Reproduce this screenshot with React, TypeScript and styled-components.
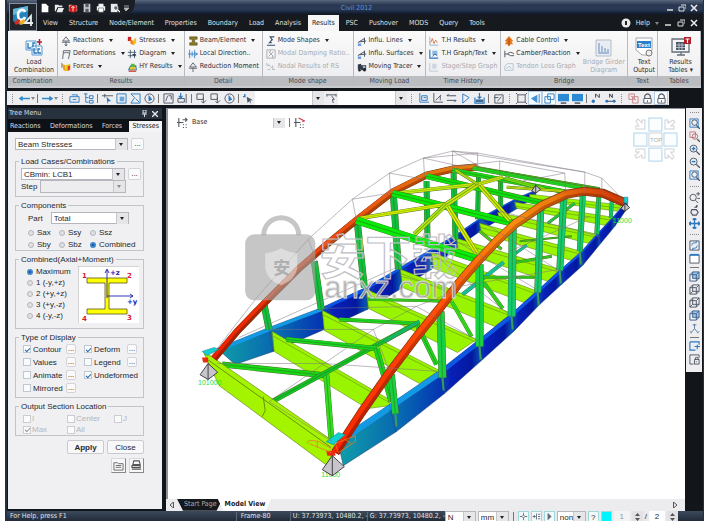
import React from "react";
import styled, { createGlobalStyle, css } from "styled-components";

const uiFont = `"DejaVu Sans Condensed", "DejaVu Sans", sans-serif`;
const formFont = `"Liberation Sans", Arial, sans-serif`;

const GlobalStyle = createGlobalStyle`
  *, *::before, *::after { box-sizing: border-box; }
  body { margin: 0; background: #fff; font: 7px/9px ${uiFont}; color: #2c2f38; }
  button, select, input { font: inherit; color: inherit; margin: 0; padding: 0; border: 0; background: none; border-radius: 0; }
  button { cursor: pointer; white-space: nowrap; }
  svg { display: block; flex: none; }
`;

/* ---------- icons ---------- */

const B = "#2b78c0";
const D = "#4c5563";

const glyphs: Record<string, React.ReactNode> = {
  new: <path d="M2 1h5l3 3v7H2z" fill="#fff" />,
  open: <path d="M1 2h4l1 1h4v2H4l-2 5H1zM5 6h7l-2 5H3z" fill="#e8eaec" />,
  openRed: (<><path d="M1 2h4l1 1h5v7H1z" fill="#e8a090" /><circle cx="6" cy="7" r="4.5" fill="#d01818" /><path d="M6 4v6M4 6l2-2 2 2" stroke="#fff" /></>),
  save: (<><path d="M2 1h8v10H2z" fill="#c8ccd2" /><path d="M4 1h4v4H4zM4 7h4v4H4z" fill="#555c66" /></>),
  print: (<><path d="M3 1h6v3H3zM1 4h10v5H1z" fill="#f2f2f2" /><path d="M3 6h6v5H3z" fill="#fff" stroke="#555" strokeWidth=".7" /></>),
  preview: (<><path d="M1 1h8v10H1z" fill="#e9e9e9" /><circle cx="7" cy="6" r="2.6" fill="#5a6470" stroke="#fff" /><path d="M9 8l3 3" stroke="#fff" strokeWidth="1.4" /></>),
  reactions: <path d="M6 1L2 6h8zM1 7.500h10M6 7v5M4.500 10L6 12l1.500-2" stroke={D} />,
  deform: <path d="M2 12L3 2h8L9 12M3 5q4-2 7 0" stroke={D} />,
  forces: (<><path d="M1 2l4 2 1 7-3-1z" fill="#f0a020" /><path d="M5 4l6-2v6l-5 3z" fill="#e8d020" /><path d="M8 5l3-1v5l-3 2z" fill="#e04020" /><path d="M1 1v6" stroke="#3080d0" /></>),
  stresses: (<><path d="M1 1h4v5H1z" fill="#d02020" /><path d="M4 4l4 2v5l-4-2z" fill="#f08020" /><path d="M8 4l3-2v6l-3 3z" fill="#f0c020" /></>),
  diagram: (<><path d="M1 4h10M1 8h10M4 1v10M9 1v10" stroke="#40566e" /><path d="M6 6h5l-2 3z" fill="#303848" /></>),
  hy: (<><path d="M1 10l3-6h7l1 6z" fill="#2a7fc4" /><path d="M3 9l2-7h4l2 7z" fill="#58b848" /><path d="M3 9l1-3h6l1 3z" fill="#f0c030" /><path d="M2 11h9" stroke="#d03020" strokeWidth="1.500" /></>),
  beam: <path d="M2 1h9v3H8v4h3v3H2V8h3V4H2z" fill="#8a7a20" stroke="#4a4420" strokeWidth=".6" />,
  local: <path d="M2 1v10M8 1v10M0 6h12M5 3v6M9 4l2 2-2 2" stroke={B} />,
  reduction: <path d="M6 1L2 6h8zM1 7.500h10M6 7v5" stroke={D} />,
  mode: <path d="M10 1H5l2 3-2 4M8 4L4 8l3 0M1 11h10" stroke="#3a536c" strokeWidth="1.300" />,
  damping: <path d="M1 1h10v10H1zM3 3l6 6M9 3L3 9M5 1v3M8 8v3" stroke="#a0a4aa" />,
  nodal: <path d="M1 1v3h3M3 3l5 5M8 4v5h3M2 9h3" stroke="#b0b4ba" />,
  influ: (<><path d="M1 8L9 3v6M3 7l8-1M9 2v7" stroke="#4a5666" strokeWidth="1.200" /><path d="M1 9h4v3H1z" fill="#6a9ce0" /></>),
  tracer: (<><path d="M1 3l4-1v7H1zM5 4h6v6H5z" fill="#303c4c" /><path d="M7 5h3v2H7z" fill="#bcd" /><circle cx="3" cy="10" r="1.500" fill="#222" /><circle cx="9" cy="10" r="1.500" fill="#222" /></>),
  thRes: (<><path d="M1 1v10h10" stroke="#8aa8c8" /><path d="M2 8l2-5 2 6 2-4 2 3" stroke="#e06a30" /></>),
  thGraph: (<><path d="M1 1v10h10" stroke={B} strokeWidth="1.400" /><path d="M4 2h6v5H4z" fill="#8ab8e4" /><path d="M4 9l3-3 3 2" stroke="#204a78" /></>),
  stage: (<><path d="M1 1v10h10" stroke="#b4c4d4" /><path d="M4 2h5v6H4z" fill="#ccd6e0" /></>),
  cable: (<><path d="M6 0L1 6l2 1-2 3h3l2 2 2-2h3l-2-3 2-1z" fill="#e87820" /><path d="M6 3v9" stroke="#a04010" /></>),
  camber: <path d="M1 2v8M1 6h3q4-4 8 0M4 6q4 3 8 2" stroke="#404854" />,
  tendon: <path d="M1 10V5l3-3h7v8zM3 8q3-5 6 0" stroke="#a8c0d8" />,
  drop: <path d="M1 4h10v6H1zM3 2h6v2M4 7h4" stroke={B} />,
  tree: <path d="M1 1h4M3 1v9h3M3 5h3M7 3h4v3H7zM7 8h4v3H7z" stroke={B} />,
  pick: (<><path d="M0 3h12M3 1v4" stroke={D} /><path d="M5 4l5 5-3 0-1 3z" fill={B} /></>),
  box: (<><path d="M1 1h10v10H1z" stroke={B} /><path d="M4 4h5v5H4z" fill="#6aa6dc" /></>),
  poly: <path d="M1 1l4 4-4 6h10V1zM6 6l4 4" stroke={B} />,
  circ: (<><circle cx="6" cy="6" r="5" stroke={D} fill="none" /><path d="M5 2v7l4-2z" fill={B} /></>),
  plane: <path d="M1 1h10v10H1zM3 9l2-6M6 3h3v4" stroke={D} />,
  down: (<><path d="M1 6h7v4H1zM10 1v10" stroke={D} /><path d="M4 0v5M2 3l2 3 2-3" stroke={B} strokeWidth="1.300" /></>),
  unsel: <path d="M1 1h7v6H1zM8 5v6M6 9l2 2 3-3" stroke={D} />,
  arrowPick: (<><path d="M2 1v3H0" stroke={B} strokeWidth="1.500" /><path d="M4 4l7 4-3 0 1 4-2-3-2 2z" fill={D} /></>),
  joint: <path d="M1 2h10M1 1v3M11 1v3M6 3l3 4-2 0 1 4" stroke={D} />,
  axis: <path d="M2 0v10h10M4 3h6v5H4zM6 5h3" stroke={B} />,
  axisD: <path d="M2 0v10h10M4 8l6-6M9 3v5" stroke={D} />,
  lines: <path d="M1 3h10M1 8h10M3 1l-2 2M9 10l2-2" stroke="#3a4858" />,
  tri: <path d="M3 1v10l7-6z" stroke={B} />,
  inbox: (<><path d="M1 5v6h10V5M6 0v6M4 4l2 2 2-2" stroke={B} strokeWidth="1.300" /><path d="M2 7h8v3H2z" fill="#406890" /></>),
  edit: <path d="M2 2h9v9H2zM5 9l4-5M1 5h5" stroke={D} />,
  frame: <path d="M2 2h8v8H2zM0 0l2 2M12 0l-2 2M0 12l2-2M12 12l-2-2" stroke={D} />,
  fan: (<><path d="M1 6l7-4v9z" fill="#3f92d8" /><path d="M10 1v10" stroke={B} /></>),
  copy: <path d="M4 1h7v6H4zM1 4h6v7H1z" stroke={B} />,
  monitor: (<><path d="M0 1h12v8H0z" fill="#2b8ad4" /><path d="M3 11h6" stroke={D} strokeWidth="1.600" /></>),
  node: (<><path d="M5 5V1l4 4V1" stroke="#303848" /><circle cx="2.500" cy="9" r="1.800" fill={B} /></>),
  nodes: (<><path d="M5 5V1l3 4V1M1 9h10" stroke="#303848" /><circle cx="2" cy="9" r="1.600" fill={B} /><circle cx="10" cy="9" r="1.600" fill={B} /></>),
  copyRed: <path d="M1 1h6v6H1zM5 4h6v7H5zM3 3l6 5" stroke="#c8868a" />,
  lock: (<><path d="M3 6V3q3-4 6 0v3" stroke={D} strokeWidth="1.200" /><path d="M2 6h8v5H2z" fill="#fff" stroke={D} /><path d="M6 8v2" stroke={D} /></>),
  left: <path d="M12 6H2M4 4L1 6l3 2" stroke="#2f8ad0" strokeWidth="1.600" />,
  right: <path d="M0 6h10M8 4l3 2-3 2" stroke="#2f8ad0" strokeWidth="1.600" />,
  zoomFit: (<><path d="M1 1h9v9H1z" stroke={B} /><circle cx="6" cy="5" r="3" stroke={D} fill="#e6f1fa" /><path d="M8 8l4 4" stroke={D} strokeWidth="1.400" /></>),
  zoomRed: (<><path d="M1 1h6v6H1z" stroke="#c87878" /><circle cx="6.500" cy="6" r="3" stroke="#a86a70" fill="none" /><path d="M9 9l3 3" stroke={D} strokeWidth="1.400" /></>),
  zoomIn: (<><circle cx="5" cy="5" r="3.800" stroke={D} fill="#e6f1fa" /><path d="M8 8l4 4" stroke={D} strokeWidth="1.400" /><path d="M3 5h4M5 3v4" stroke={B} strokeWidth="1.500" /></>),
  zoomOut: (<><circle cx="5" cy="5" r="3.800" stroke={D} fill="#e6f1fa" /><path d="M8 8l4 4" stroke={D} strokeWidth="1.400" /><path d="M3 5h4" stroke={B} strokeWidth="1.500" /></>),
  zoomDyn: (<><circle cx="4.500" cy="6" r="3.500" stroke={D} fill="none" /><path d="M7 9l3 3M8 2h4M10 0v4M9 7h3" stroke={D} /></>),
  rotate: <path d="M3 5h5l2 3-2 3H4L2 8zM6 3l3-2M8 0l1 1-1 2" stroke={D} strokeWidth="1.200" />,
  pan: <path d="M6 0v12M0 6h12M4 2l2-2 2 2M4 10l2 2 2-2M2 4L0 6l2 2M10 4l2 2-2 2" stroke={B} strokeWidth="1.500" />,
  refresh: (<><path d="M1 1h10v10H1z" stroke={D} /><path d="M3 6q0-3 3-3h2V1M9 6q0 3-3 3H4v2" stroke={B} /></>),
  view: (<><path d="M1 2h10v9H1z" stroke={D} fill="#fff" /><path d="M1 2h10" stroke={B} strokeWidth="2" /></>),
  cube: <path d="M1 4h7v7H1zM4 1h7v7H4zM1 4l3-3M8 4l3-3M8 11l3-3M1 11l3-3" stroke={D} />,
  cubeFill: (<><path d="M4 1h7v7H4z" fill="#9fc6ea" /><path d="M1 4h7v7H1zM4 1h7v7H4zM1 4l3-3M8 4l3-3M8 11l3-3" stroke="#3d5f88" /></>),
  tripod: <path d="M6 1v5M6 6l-4 5M6 6l4 5M4 2h4M1 9l2 2M11 9l-2 2" stroke="#587898" />,
  addWin: <path d="M1 1h10v3M1 1v9h6M6 6h6M9 4v5" stroke={B} strokeWidth="1.200" />,
  lockWin: <path d="M1 1h10v3M1 1v10h4M6 6h5v5H6zM7 6V4h3v2M8 8v1" stroke={D} />,
  list: <path d="M1 3h4l1 1h5v7H1zM3 6h6M3 8h6" stroke="#666" />,
  stack: <path d="M3 1h6l1 4H2zM1 6h9v2H1zM1 10h10" stroke="#555" strokeWidth="1.200" />,
  section: <path d="M2 1v10M9 1l2 2-2 2M0 6h7M6 3h5M7 8v1M10 8v1M7 11v1M10 11v1" stroke="#505860" strokeWidth="1.200" />,
  sectionRed: (<><path d="M2 1v10M0 6h7M7 8v1M10 8v1M7 11v1M10 11v1" stroke="#505860" strokeWidth="1.200" /><path d="M5 1l6 3M9 5l3-1" stroke="#d03040" strokeWidth="1.200" /></>),
  snap: <path d="M6 1v3M6 8v3M1 6h3M8 6h3M4 6l2-2 2 2-2 2z" stroke="#456" />,
  grid: <path d="M1 6h4M6 2v8M8 3h3M8 6h3M8 9h3M3 4v4" stroke="#456" />,
  play: <path d="M4 2v8l4-4zM6 4v4" stroke="#456" fill="#789" />,
};

function Icon({ name, size = 11 }: { name: string; size?: number }) {
  return <svg width={size} height={size} viewBox="0 0 12 12" fill="none" aria-hidden="true">{glyphs[name]}</svg>;
}

const Caret = styled.span<{ $dim?: boolean }>`
  width: 0; height: 0; flex: none;
  border: 2px solid transparent; border-top: 3px solid ${(p) => (p.$dim ? "#888" : "#222")}; border-bottom: 0;
`;

/* ---------- frame ---------- */

const Page = styled.div`
  min-height: 100vh; padding: 0 4px 0 5px; display: flex; background: #fff;
`;
const Window = styled.div`
  flex: 1; min-width: 0; display: flex; flex-direction: column;
  background: #12161b; border: solid #26313f; border-width: 0 1px 0 2px;
`;
const Header = styled.header`
  display: grid; grid-template-columns: 30px minmax(0, 1fr); grid-template-rows: 15px 16px;
  background: linear-gradient(#59677d 0, #2a3650 5px, #2b3b58 9px, #101a2a 14px, #16191e 15px);
`;
const Logo = styled.button`
  grid-row: 1 / 3; align-self: end; margin-left: 2px; width: 28px; height: 28px;
  display: grid; place-items: center;
  background: #20262d; border: 1px solid #8b929b;
`;
const TitleBar = styled.div`
  display: grid; grid-template-columns: auto minmax(0, 1fr) auto; align-items: center;
`;
const QuickBar = styled.div`
  display: flex; align-items: center; gap: 4px; height: 15px; padding: 0 6px 0 3px;
  background: #1b1f25; border-bottom-right-radius: 12px; color: #fff;
  button { display: flex; }
`;
const AppTitle = styled.h1`
  margin: 0; padding-right: 88px; text-align: center; font: 7px/12px ${uiFont}; color: #4f92da;
`;
const WindowButtons = styled.div`
  display: flex; align-items: center; gap: 4px; padding-right: 5px;
  button { display: flex; }
`;
const TabBar = styled.nav`
  display: flex; align-items: stretch; background: #16191e; color: #dfe1e4;
`;
const TabButton = styled.button<{ $active?: boolean }>`
  padding: 0 5px 0 6px;
  ${(p) => p.$active && css`background: #f6f6f7; color: #1b1e25; padding: 0 4px; margin: 0 1px 0 2px;`}
`;
const TabRight = styled.div`
  margin-left: auto; display: flex; align-items: center; gap: 5px; padding-right: 5px;
  button { display: flex; }
`;

/* ---------- ribbon ---------- */

const Ribbon = styled.div`
  display: grid; margin: 0 2px 0 1px; height: 57px; background: #f1f1f3; border-bottom: 2px solid #c9cacd;
  grid-template-columns:
    minmax(0, 50fr) minmax(0, 127fr) minmax(0, 78fr) minmax(0, 91fr) minmax(0, 73fr)
    minmax(0, 75fr) minmax(0, 127fr) minmax(0, 30fr) minmax(0, 43fr);
`;
const Group = styled.section`
  display: flex; flex-direction: column; min-width: 0; border-right: 1px solid #b9babd;
  background: linear-gradient(#fafafa, #ececef);
`;
const GroupBody = styled.div`
  flex: 1; display: flex; padding: 3px 0 0 3px; min-width: 0;
`;
const Caption = styled.h2`
  margin: 0; height: 10px; font: 7px/10px ${uiFont}; text-align: center; color: #494c53;
  background: #bcbdc0; white-space: nowrap;
`;
const Column = styled.div<{ $width?: number }>`
  display: flex; flex-direction: column; min-width: 0; flex: ${(p) => (p.$width ? `0 1 ${p.$width}%` : "1")};
`;
const Command = styled.button`
  display: flex; align-items: center; gap: 2px; height: 13px; overflow: hidden;
  &:disabled { color: #a9abb0; }
  ${Caret} { margin-left: 3px; }
`;
const BigCommand = styled.button`
  flex: 1; display: flex; flex-direction: column; align-items: center; justify-content: flex-end;
  padding-bottom: 2px; line-height: 8px; gap: 1px; min-width: 0;
  &:disabled { color: #a9abb0; }
  span { white-space: pre-line; }
`;

type Cmd = { icon: string; label: string; menu?: boolean; off?: boolean };
const c = (icon: string, label: string, menu = false, off = false): Cmd => ({ icon, label, menu, off });

function Commands({ items, width }: { items: Cmd[]; width?: number }) {
  return (
    <Column $width={width}>
      {items.map((i) => (
        <Command key={i.label} disabled={i.off}>
          <Icon name={i.icon} size={10} />{i.label}{i.menu && <Caret />}
        </Command>
      ))}
    </Column>
  );
}

/* ---------- tool strips ---------- */

const StripRow = styled.div`
  display: flex; margin: 3px 34px 3px 0; height: 14px; align-items: center; background: #eeeef1; padding: 0 1px;
`;
const ToolButton = styled.button<{ $on?: boolean }>`
  width: 14px; height: 14px; display: grid; place-items: center; flex: 0 1 auto;
  ${(p) => p.$on && css`background: #f6fbff; outline: 1px solid #b6cde4; outline-offset: -1px;`}
`;
const Separator = styled.span`
  width: 1px; height: 9px; background: #777; margin: 0 2px; flex: none;
`;
const Grip = styled.span`
  width: 0; height: 9px; border-left: 1px dotted #888; margin: 0 4px; flex: none;
`;
const Combo = styled.span<{ $w?: number; $h?: number; $dim?: boolean }>`
  display: grid; grid-template-columns: minmax(0, 1fr) 12px; align-items: center; justify-items: center;
  flex: ${(p) => (p.$w ? `0 1 ${p.$w}px` : "1")}; min-width: 0; height: ${(p) => p.$h ?? 12}px;
  background: ${(p) => (p.$dim ? "#ededf0" : "#fff")}; border: 1px solid #b5b7bc;
  select { grid-area: 1 / 1 / 2 / 3; width: 100%; height: 100%; appearance: none; padding: 0 2px; outline: 0; }
  ${Caret} { grid-area: 1 / 2; pointer-events: none; z-index: 1; }
  &::after { content: ""; grid-area: 1 / 2; width: 12px; height: 100%; background: #e6e6e9; border-left: 1px solid #c6c7cb; pointer-events: none; }
`;
const PlainCombo = styled(Combo)`
  border: 0; height: 14px;
`;

function Picker({ label, value, w, h, disabled, plain }: { label: string; value: string; w?: number; h?: number; disabled?: boolean; plain?: boolean }) {
  const Box = plain ? PlainCombo : Combo;
  return (
    <Box $w={w} $h={h} $dim={disabled}>
      <select aria-label={label} disabled={disabled} defaultValue={value}><option>{value}</option></select>
      <Caret $dim={disabled} />
    </Box>
  );
}

function Tools({ list }: { list: string }) {
  return (
    <>
      {list.split(" ").map((n, i) =>
        n === "|" ? <Separator key={i} /> : n === ":" ? <Grip key={i} /> :
          <ToolButton key={i} $on={n.endsWith("*")} aria-label={n.replace("*", "")}><Icon name={n.replace("*", "")} /></ToolButton>)}
    </>
  );
}

/* ---------- work area ---------- */

const Workspace = styled.div`
  flex: 1; display: grid; grid-template-columns: 155px minmax(0, 1fr) 17px; min-height: 0;
`;
const SidePanel = styled.aside`
  display: flex; flex-direction: column; margin: 0 0 2px 1px; min-width: 0;
`;
const PanelTitle = styled.div`
  display: flex; align-items: center; height: 11px; padding: 0 4px 0 1px; background: #28323f; color: #d8dce2; gap: 5px;
  span { flex: 1; }
`;
const PanelTabs = styled.div`
  display: flex; height: 13px; padding-top: 2px; justify-content: space-between; background: #0e1115; color: #d8dce2;
`;
const PanelTab = styled.button<{ $active?: boolean }>`
  padding: 0 2px;
  ${(p) => p.$active && css`background: #f4f4f6; color: #16191f; padding: 0 3px;`}
`;
const PanelBody = styled.form`
  flex: 1; background: #f0f0f3; padding: 6px 18px 0 7px; font: 8px/11px ${formFont}; color: #26282d;
  display: flex; flex-direction: column; gap: 4px;
`;
const Line = styled.div<{ $gap?: number; $pad?: number }>`
  display: flex; align-items: center; gap: ${(p) => p.$gap ?? 3}px; padding-left: ${(p) => p.$pad ?? 0}px;
`;
const FirstLine = styled(Line)`
  margin-bottom: 3px;
`;
const Box = styled.fieldset<{ $h: number }>`
  margin: 0; padding: 2px 2px 0 5px; border: 1px solid #c2c4c9; min-width: 0; min-height: ${(p) => p.$h}px;
  legend { padding: 0 2px; margin-left: -2px; line-height: 9px; }
`;
const MoreButton = styled.button<{ $small?: boolean }>`
  width: ${(p) => (p.$small ? 10 : 13)}px; height: ${(p) => (p.$small ? 10 : 12)}px; line-height: 8px; flex: none;
  background: #fafafb; border: 1px solid #d3d4d8; border-radius: 2px;
`;
const Choice = styled.label<{ $dim?: boolean }>`
  display: flex; align-items: center; gap: 3px; white-space: nowrap; color: ${(p) => (p.$dim ? "#b4b7bd" : "inherit")};
`;
const Radio = styled.input.attrs({ type: "radio" })`
  appearance: none; width: 6px; height: 6px; border-radius: 50%; border: 1px solid #b4b6bb; background: #dfe0e3; flex: none;
  &:checked { border: 2px solid #3f87cc; background: #174a8c; }
`;
const Check = styled.input.attrs({ type: "checkbox" })`
  appearance: none; width: 8px; height: 8px; border: 1px solid #bfc7d0; background: #fafbfc; flex: none; display: grid; place-items: center;
  &:checked::before { content: ""; width: 5px; height: 3px; border: solid #2468b0; border-width: 0 0 1px 1px; transform: rotate(-45deg); }
  &:disabled { border-color: #cbcdd1; }
  &:disabled:checked::before { border-color: #999; }
`;
const RadioGrid = styled.div`
  display: grid; grid-template-columns: 31px 31px auto; row-gap: 1px; padding: 3px 0 0 7px; justify-content: start;
`;
const SectionLayout = styled.div`
  display: grid; grid-template-columns: minmax(0, 1fr) 63px; padding: 0 0 0 6px;
`;
const DisplayGrid = styled.div`
  display: grid; grid-template-columns: 43px 18px 43px 13px; row-gap: 3px; align-items: center; padding-left: 2px;
  label { gap: 2px; height: 10px; }
`;
const Wide = styled.div`
  grid-column: span 2;
`;
const OutputGrid = styled.div`
  display: grid; grid-template-columns: 44px 47px auto; justify-content: start; padding-left: 2px;
  label { gap: 1px; }
`;
const Actions = styled.div`
  display: flex; justify-content: flex-end; gap: 3px;
`;
const PushButton = styled.button<{ $strong?: boolean }>`
  width: 37px; height: 14px; background: #f8f8f9; border: 1px solid #c9cace; border-radius: 2px;
  font-weight: ${(p) => (p.$strong ? 700 : 400)};
`;
const IconPush = styled.button`
  width: 15px; height: 15px; display: grid; place-items: center; background: #f8f8f9; border: 1px solid #d8d8dc;
  border-right-color: #888; border-bottom-color: #888;
`;

const Main = styled.main`
  display: flex; flex-direction: column; min-width: 0; margin: 0 1px 0 4px;
`;
const Canvas = styled.div`
  flex: 1; position: relative; background: #fff; border: solid #8b929a; border-width: 1px 0 0 2px; min-height: 388px; display: flex;
`;
const Scene = styled.svg`
  flex: 1; min-width: 0; width: 100%; height: auto;
`;
const StageBar = styled.div`
  position: absolute; left: 9px; top: 8px; width: 128px; display: flex; align-items: center; gap: 2px;
`;
const StageCombo = styled(PlainCombo)`
  height: 10px;
`;
const SheetTabs = styled.div`
  display: flex; align-items: center; height: 12px; background: #ececef; padding: 0 8px 0 4px; gap: 3px;
`;
const Sheet = styled.button<{ $active?: boolean }>`
  height: 12px; padding: 0 6px 0 7px; clip-path: polygon(0 0, 100% 0, calc(100% - 6px) 100%, 6px 100%);
  background: ${(p) => (p.$active ? "#fff" : "#15181c")}; color: ${(p) => (p.$active ? "#222" : "#a9acb1")};
  font-weight: ${(p) => (p.$active ? 700 : 400)};
  & + & { margin-left: -8px; }
`;
const Spacer = styled.span`
  flex: 1;
`;
const RightStrip = styled.div`
  align-self: start; display: flex; flex-direction: column; align-items: center; background: #eeeef1; padding-bottom: 6px; margin-right: 1px;
  ${ToolButton} { height: 13px; }
  ${Separator} { width: 9px; height: 1px; margin: 2px 0; }
  ${Grip} { width: 9px; height: 0; border-left: 0; border-top: 1px dotted #888; margin: 4px 0; }
`;

/* ---------- status bar ---------- */

const StatusBar = styled.footer`
  display: flex; align-items: center; height: 12px; background: linear-gradient(#3c4a5d, #1c2531); color: #e1e4e9; padding: 0 25px 0 3px;
`;
const StatusCell = styled.span<{ $w: number }>`
  flex: 0 1 ${(p) => p.$w}px; min-width: 0; border-left: 1px solid #5b6778; padding-left: 2px; white-space: nowrap; overflow: hidden;
`;
const StatusTools = styled.div`
  flex: none; display: flex; align-items: center; gap: 2px; height: 12px; background: #e9e9ec; color: #25282e; font: 8px/11px ${formFont};
  ${Combo} { flex-shrink: 0; }
`;
const StatusButton = styled.button<{ $fill?: string }>`
  width: 11px; height: 11px; display: grid; place-items: center; flex: none; background: ${(p) => p.$fill ?? "#f3f8f8"}; border: 1px solid #a2d8dc;
`;
const NumberBox = styled.input`
  width: 16px; height: 11px; text-align: center; background: #fff;
  &:disabled { background: #f3f3f5; color: #999; }
`;
const Stepper = styled.button`
  width: 11px; height: 11px; display: grid; place-items: center; flex: none; background: #e2e2e5;
`;

/* ---------- model drawing ---------- */

type P = [number, number];
const str = (pts: P[]) => pts.map((p) => p.join(",")).join(" ");

const rearArch: P[] = [[215, 357], [238, 330], [267, 300], [300, 267], [330, 241], [357, 219], [393, 191], [427, 174], [453, 168], [477, 166]];
const frontArch: P[] = [[336, 451], [362, 411], [390, 371], [415, 338], [440, 307], [460, 281], [478, 260], [497, 240], [515, 223], [543, 204], [567, 193], [585, 190], [603, 192], [626, 202]];
const frontTop: P[] = [[338, 438], [390, 403], [440, 369], [477, 340], [512, 312], [538, 289], [560, 269], [581, 251], [597, 233], [613, 216], [627, 200]];
const frontLow: P[] = [[344, 464], [397, 430], [445, 392], [483, 358], [514, 330], [540, 303], [562, 283], [583, 264], [601, 242], [615, 225], [628, 206]];
const rearTop: P[] = [[218, 347], [270, 326], [323, 306], [367, 286], [401, 266], [430, 249], [457, 233], [482, 216], [517, 197], [536, 189]];
const rearLow: P[] = [[236, 363], [274, 350], [325, 328], [368, 308], [402, 287], [432, 268], [458, 246], [482, 229], [518, 207], [536, 195]];
const frontHangers: [P, P, number][] = [
  [[392, 373], [396, 412], 7], [[441, 310], [443, 376], 8], [[480, 263], [480, 345], 8], [[513, 227], [512, 315], 8], [[541, 207], [538, 291], 7],
  [[564, 197], [560, 269], 7], [[583, 193], [580, 250], 6], [[599, 195], [597, 233], 5], [[612, 198], [611, 217], 4],
];
const rearHangers: [P, P, number][] = [
  [[265, 304], [270, 328], 7], [[315, 260], [322, 308], 7], [[358, 222], [365, 286], 7], [[394, 194], [399, 268], 7],
  [[427, 180], [428, 237], 6], [[454, 172], [456, 238], 6], [[479, 175], [478, 218], 5], [[501, 180], [501, 205], 5],
];
const floor: P[][] = [
  [[273, 330], [390, 398], [391, 404], [368, 407], [275, 350]],
  [[323, 309], [440, 369], [420, 382], [325, 329]],
  [[367, 288], [477, 338], [458, 351], [369, 307]],
  [[401, 268], [512, 312], [495, 325], [403, 286]],
  [[432, 251], [538, 290], [524, 301], [434, 267]],
  [[457, 237], [560, 268], [548, 280], [459, 250]],
  [[480, 222], [581, 250], [571, 259], [482, 232]],
  [[498, 211], [597, 233], [588, 242], [500, 219]],
  [[515, 201], [613, 216], [605, 224], [517, 207]],
  [[530, 193], [622, 204], [617, 210], [530, 198]],
];
const bracing: [P, P, string, number][] = [
  [[223, 363], [327, 374], "#18d818", 6], [[327, 373], [332, 437], "#30e020", 6], [[273, 400], [417, 322], "#10c828", 5],
  [[287, 338], [377, 347], "#18d820", 5], [[377, 347], [392, 400], "#18d820", 6], [[340, 318], [417, 322], "#20d820", 4],
  [[417, 322], [437, 363], "#20d820", 5], [[385, 340], [420, 320], "#10c070", 4], [[368, 298], [450, 300], "#30d820", 3],
  [[452, 300], [472, 335], "#30e020", 4], [[463, 293], [504, 261], "#10c8b0", 4], [[484, 281], [503, 307], "#30d820", 4],
  [[482, 276], [535, 276], "#30d820", 3], [[516, 252], [527, 244], "#10c8b0", 3], [[480, 230], [502, 248], "#50d820", 3],
  [[510, 262], [552, 255], "#30d820", 3], [[548, 222], [575, 202], "#20d050", 3], [[520, 240], [572, 235], "#40d820", 2],
];
const topBeams: [P, P, string, number][] = [
  [[477, 166], [600, 187], "#48c020", 2], [[473, 167], [583, 187], "#20d820", 4], [[453, 169], [567, 191], "#18d818", 5], [[427, 175], [543, 202], "#0ee010", 6],
  [[397, 192], [478, 183], "#c8ec10", 4], [[393, 192], [513, 222], "#08ea08", 7], [[360, 217], [447, 203], "#d8f000", 4],
  [[447, 203], [415, 233], "#b8e810", 5], [[448, 205], [477, 252], "#e0f000", 5], [[480, 184], [510, 219], "#d8ec00", 5],
  [[478, 183], [447, 203], "#c8e810", 5], [[478, 183], [503, 176], "#c8e010", 4], [[456, 169], [478, 183], "#c0e810", 3],
  [[505, 177], [545, 188], "#70e010", 4], [[507, 186], [565, 190], "#c8e810", 3], [[357, 219], [478, 258], "#08ea08", 8],
];
const wires: P[][] = [
  [[212, 355], [257, 297], [284, 266], [309, 238], [353, 198], [390, 172], [424, 157], [453, 150], [478, 152], [585, 171], [602, 177], [615, 190], [626, 202]],
  [[353, 198], [391, 192]], [[390, 172], [424, 178]], [[424, 157], [478, 152]], [[424, 157], [460, 165], [500, 160]],
  [[353, 198], [357, 219]], [[390, 172], [391, 191]], [[424, 157], [425, 175]], [[453, 150], [453, 168]], [[478, 152], [478, 168]],
  [[500, 160], [500, 175]], [[565, 172], [566, 192]], [[585, 171], [585, 190]], [[602, 177], [602, 192]], [[309, 238], [318, 262]],
  [[500, 160], [565, 172], [522, 180]], [[453, 150], [488, 170]], [[453, 150], [585, 171]],
  [[218, 362], [325, 362]], [[270, 328], [374, 328], [270, 400]], [[323, 307], [417, 305], [374, 328]], [[325, 362], [440, 370]],
  [[374, 328], [390, 370]], [[417, 305], [480, 340]], [[402, 275], [455, 290], [417, 305]], [[430, 250], [512, 315]], [[460, 285], [560, 268]],
  [[240, 336], [420, 256]], [[457, 240], [540, 290]], [[482, 220], [560, 270]], [[500, 210], [600, 235]], [[510, 250], [590, 215]], [[270, 400], [333, 440]],
];

function Member({ a, b, color, width }: { a: P; b: P; color: string; width: number }) {
  const pts = { x1: a[0], y1: a[1], x2: b[0], y2: b[1] };
  return (
    <g>
      <line {...pts} stroke="#4f6b20" strokeWidth={width} />
      <line {...pts} stroke={color} strokeWidth={width - 0.8} />
      <line {...pts} stroke="#2a7a18" strokeOpacity=".55" strokeWidth={width > 4 ? 1 : 0.5} />
    </g>
  );
}

function Girder({ top, low, near }: { top: P[]; low: P[]; near?: boolean }) {
  return (
    <g>
      {top.slice(1).map((p, i) => {
        const fill = i === 0 ? "url(#girderEnd)" : i === 1 ? "url(#girderMid)" : "url(#girder)";
        return <polygon key={i} points={str([top[i], p, low[i + 1], low[i]])} fill={fill} stroke="#143a70" strokeWidth=".5" />;
      })}
      {top.slice(1).map((p, i) => {
        const k = near ? Math.max(1, 7 - i * 0.7) : Math.max(1, 4 - i * 0.4);
        return <polygon key={i} points={str([top[i], p, [p[0], p[1] + k], [top[i][0], top[i][1] + k]])} fill={i < 2 ? "#149ae4" : "#0c58e4"} />;
      })}
    </g>
  );
}

function Arch({ pts, paint, width }: { pts: P[]; paint: string; width: number }) {
  return (
    <g fill="none" strokeLinejoin="round">
      <polyline points={str(pts)} stroke="#6b3a10" strokeWidth={width} />
      <polyline points={str(pts)} stroke={`url(#${paint}Dark)`} strokeWidth={width - 1} />
      <polyline points={str(pts.map(([x, y]) => [x - 1, y - 1] as P))} stroke={`url(#${paint})`} strokeWidth={width / 2} />
    </g>
  );
}

function Support({ x, y, s }: { x: number; y: number; s: number }) {
  return (
    <g stroke="#222" strokeWidth=".8" fill="#c8c4cc">
      <path d={`M${x} ${y}l${-s} ${s * 1.4}l${s} ${s * 0.6}l${s * 1.2} ${-s * 0.9}z`} />
      <path d={`M${x} ${y}v${s * 2}`} />
    </g>
  );
}

const cubeFaces: P[] = [[649, 117], [634, 132], [664, 132], [649, 147]];
const cubeArrows: [number, number, number][] = [[640, 123, 0], [670, 123, 90], [670, 153, 180], [640, 153, 270]];

function BridgeModel() {
  return (
    <Scene viewBox="169 108 516 389" preserveAspectRatio="xMidYMid meet" role="img" aria-label="Beam stress contour of an arch bridge">
      <defs>
        <linearGradient id="girder"><stop offset="0" stopColor="#0a50a8" /><stop offset=".25" stopColor="#0820b8" /><stop offset=".75" stopColor="#0418a0" /><stop offset="1" stopColor="#0860b8" /></linearGradient>
        <linearGradient id="girderMid"><stop offset="0" stopColor="#0878b0" /><stop offset="1" stopColor="#0430b4" /></linearGradient>
        <linearGradient id="girderEnd"><stop offset="0" stopColor="#10a0a8" /><stop offset="1" stopColor="#0868b0" /></linearGradient>
        <linearGradient id="rear" gradientUnits="userSpaceOnUse" x1="215" y1="357" x2="477" y2="166"><stop offset="0" stopColor="#f02000" /><stop offset=".6" stopColor="#ec5010" /><stop offset="1" stopColor="#e08010" /></linearGradient>
        <linearGradient id="rearDark" gradientUnits="userSpaceOnUse" x1="215" y1="357" x2="477" y2="166"><stop offset="0" stopColor="#a81c00" /><stop offset="1" stopColor="#b85008" /></linearGradient>
        <linearGradient id="front" gradientUnits="userSpaceOnUse" x1="336" y1="451" x2="626" y2="202"><stop offset="0" stopColor="#f82400" /><stop offset=".45" stopColor="#ff5008" /><stop offset=".74" stopColor="#f88c10" /><stop offset=".86" stopColor="#ec7c10" /><stop offset="1" stopColor="#d03808" /></linearGradient>
        <linearGradient id="frontDark" gradientUnits="userSpaceOnUse" x1="336" y1="451" x2="626" y2="202"><stop offset="0" stopColor="#b01800" /><stop offset=".45" stopColor="#d43c04" /><stop offset=".74" stopColor="#d06c08" /><stop offset="1" stopColor="#a83008" /></linearGradient>
      </defs>

      <Girder top={rearTop} low={rearLow} />
      {floor.map((f, i) => (
        <g key={i}>
          <polygon points={str(f)} fill="#98f400" stroke="#6c8c20" strokeWidth=".6" />
          <polyline points={str([[f[0][0], f[0][1] + 4], [f[1][0], f[1][1] + 3]])} stroke="#6c9010" strokeWidth=".6" fill="none" />
        </g>
      ))}
      {bracing.map(([a, b, color, w], i) => <Member key={i} a={a} b={b} color={color} width={w} />)}
      {rearHangers.map(([a, b, w], i) => <Member key={i} a={a} b={b} color="#10c040" width={w} />)}
      <Girder top={frontTop} low={frontLow} near />
      {frontHangers.map(([a, b, w], i) => <Member key={i} a={a} b={b} color={i > 2 ? "#12cc70" : "#18d040"} width={w} />)}
      {frontHangers.slice(0, 7).map(([, b], i) => <line key={i} x1={b[0]} y1={b[1]} x2={b[0] + 1} y2={b[1] + 13} stroke="#3a9a60" strokeWidth="2" />)}
      <polygon points="205,352 211,354 333,439 336,444 328,464 220,384" fill="#a4f400" stroke="#6c8c20" strokeWidth=".7" />
      <path d="M207 357L332 446M264 395l2 14-3 6" stroke="#5c7818" strokeWidth=".8" fill="none" />
      <Arch pts={rearArch} paint="rear" width={7} />
      {topBeams.map(([a, b, color, w], i) => <Member key={i} a={a} b={b} color={color} width={w} />)}
      <Arch pts={frontArch} paint="front" width={9} />
      <path d="M203 350l12-4 5 2-12 6zM327 440l12-9 7 2-12 10zM624 196h4v6h-4z" fill="#10d0d0" stroke="#187888" strokeWidth=".5" />
      <path d="M203 356h6v5h-5zM327 449h9v5h-8z" fill="#f02810" />
      <path d="M308 442q-1-5 12-2l12 7M310 442l22 9M336 442l20-8v6l-17 11zM318 440v6M346 438l6 4" fill="none" stroke="#f07828" strokeWidth=".8" />

      <g fill="none" stroke="#7c7280" strokeWidth=".5">{wires.map((w, i) => <polyline key={i} points={str(w)} />)}</g>
      <g fill="#28e040" fontFamily="Liberation Sans, sans-serif" fontSize="7">
        <text x="199" y="383">101000</text><text x="322" y="475">11000</text><text x="613" y="222">11000</text>
      </g>
      <Support x={209} y={362} s={8} />
      <Support x={333} y={454} s={10} />
      <Support x={536} y={184} s={4} />
      <Support x={625} y={202} s={4} />

      <g fill="#a3a3a3" fillOpacity=".62">
        <path d="M262 234a20 20 0 0 1 40 0h-5a15 15 0 0 0-30 0z" />
        <rect x="246" y="233" width="70" height="66" rx="9" />
        <path d="M266 252q9-1 16-5 7 4 16 5v15q-2 12-16 17-14-5-16-17z" fill="#fff" fillOpacity=".4" />
        <text x="274" y="273" fontFamily="Noto Sans CJK SC, sans-serif" fontSize="17" fontWeight="700" fillOpacity=".8">安</text>
      </g>
      <text x="320" y="273" fontFamily="Noto Sans CJK SC, sans-serif" fontSize="46" fontWeight="700" fill="#fff" fillOpacity=".1" stroke="#c0c0c4" strokeWidth="1.200">安下载</text>
      <text x="325" y="297" fontFamily="Liberation Sans, sans-serif" fontSize="31" fill="#999" fillOpacity=".75" stroke="#ddd" strokeWidth=".8">anxz.com</text>

      <g fill="#fff" stroke="#cfd2d6">
        {cubeFaces.map(([x, y], i) => <rect key={i} x={x} y={y} width="13" height="13" stroke="#abd5ee" fill="#fcfdfe" />)}
        <rect x="649" y="132" width="13" height="13" />
        {cubeArrows.map(([x, y, r], i) => <path key={i} transform={`translate(${x} ${y}) rotate(${r})`} d="M-4-3l2-2 4 4V-4H5V5H-4V2H-1z" />)}
      </g>
      <text x="650" y="141" fontFamily="Liberation Sans, sans-serif" fontSize="6" fill="#a8abb0">TOP</text>
    </Scene>
  );
}

function SectionDiagram() {
  return (
    <svg width="61" height="57" viewBox="0 0 61 57" fill="none" aria-label="I section with corner numbering">
      <path d="M0 0h61v57H0z" fill="#fff" />
      <path d="M0 57V0h61" stroke="#aaa" />
      <path d="M9 12h40v5H31v26h18v5H9v-5h18V17H9z" fill="#ffff00" stroke="#55551a" strokeWidth=".8" />
      <path d="M29 32V4M27 7l2-4 2 4M29 30h26M52 28l3 2-3 2" stroke="#2020a8" strokeWidth=".9" />
      <g fontFamily="DejaVu Sans, sans-serif" fontWeight="700" fontSize="7">
        <g fill="#d81830"><text x="4" y="12">1</text><text x="49" y="12">2</text><text x="4" y="55">4</text><text x="49" y="54">3</text></g>
        <g fill="#2020b8"><text x="32" y="9">+z</text><text x="49" y="38">+y</text></g>
      </g>
    </svg>
  );
}

function WindowControls() {
  return (
    <>
      <button aria-label="Minimize"><svg width="8" height="8" viewBox="0 0 8 8"><path d="M1 6h6" stroke="#ddd" strokeWidth="1.500" /></svg></button>
      <button aria-label="Restore"><svg width="8" height="8" viewBox="0 0 8 8"><path d="M1 3h5v4H1zM3 1h5v4" stroke="#ddd" fill="none" /></svg></button>
      <button aria-label="Close"><svg width="8" height="8" viewBox="0 0 8 8"><path d="M1 1l6 6M7 1L1 7" stroke="#eee" strokeWidth="1.500" /></svg></button>
    </>
  );
}

function DisplayOption({ label, checked, more = true }: { label: string; checked?: boolean; more?: boolean }) {
  const option = <Choice><Check defaultChecked={checked} />{label}</Choice>;
  return more ? <>{option}<MoreButton type="button" $small aria-label={`${label} options`}>...</MoreButton></> : <Wide>{option}</Wide>;
}

const tabs = ["View", "Structure", "Node/Element", "Properties", "Boundary", "Load", "Analysis", "Results", "PSC", "Pushover", "MODS", "Query", "Tools"];

export default function App() {
  return (
    <Page>
      <GlobalStyle />
      <Window>
        <Header>
          <Logo aria-label="Application menu">
            <svg width="24" height="24" viewBox="0 0 24 24">
              <path d="M2 4l15-3v15l-8 4-7-4z" fill="#2482bc" /><path d="M2 4l15-3v5L2 10z" fill="#63b6dc" />
              <path d="M14 7q-1-3-4-2-3 1-3 5t3 5q3 0 4-3" stroke="#fff" strokeWidth="2.500" fill="none" />
              <path d="M3 17l5-3 2 3-5 3z" fill="#d42a20" /><path d="M8 17l5-3 2 4-5 2z" fill="#f0b020" />
              <path d="M20 21V11l-6 7h8" stroke="#e8edf0" strokeWidth="1.800" fill="none" />
            </svg>
          </Logo>
          <TitleBar>
            <QuickBar>
              {["new", "open", "openRed", "save", "print", "preview"].map((n) => <button key={n} aria-label={n}><Icon name={n} size={10} /></button>)}
              <button aria-label="Customize"><svg width="5" height="8" viewBox="0 0 5 8"><path d="M0 2h5M0 4h5L2 7z" stroke="#bbb" fill="#bbb" strokeWidth=".8" /></svg></button>
            </QuickBar>
            <AppTitle>Civil 2012</AppTitle>
            <WindowButtons><WindowControls /></WindowButtons>
          </TitleBar>
          <TabBar>
            {tabs.map((t) => <TabButton key={t} $active={t === "Results"}>{t}</TabButton>)}
            <TabRight>
              <svg width="10" height="10" viewBox="0 0 10 10"><circle cx="5" cy="5" r="4.500" fill="#e8eaec" /><path d="M4 3h2v4H4z" fill="#222" /></svg>
              <button>Help</button><Caret $dim />
              <WindowControls />
            </TabRight>
          </TabBar>
        </Header>

        <Ribbon>
          <Group>
            <GroupBody>
              <BigCommand>
                <svg width="18" height="18" viewBox="0 0 18 18" fill="none"><path d="M1 2h10v9H1zM7 7h10v9H7z" fill="#f6fbff" stroke="#5a9ad4" /><path d="M3 4v5h3M9 9v5h3M10 4H8v4M15 10h-2v4h3" stroke="#2878b8" strokeWidth="1.300" /><path d="M12 3h5M14.500 0v6" stroke="#b02030" strokeWidth="1.500" /></svg>
                <span>{"Load\nCombination"}</span>
              </BigCommand>
            </GroupBody>
            <Caption>Combination</Caption>
          </Group>
          <Group>
            <GroupBody>
              <Commands width={54} items={[c("reactions", "Reactions", true), c("deform", "Deformations", true), c("forces", "Forces", true)]} />
              <Commands items={[c("stresses", "Stresses", true), c("diagram", "Diagram", true), c("hy", "HY Results", true)]} />
            </GroupBody>
            <Caption>Results</Caption>
          </Group>
          <Group>
            <GroupBody><Commands items={[c("beam", "Beam/Element", true), c("local", "Local Direction.."), c("reduction", "Reduction Moment")]} /></GroupBody>
            <Caption>Detail</Caption>
          </Group>
          <Group>
            <GroupBody><Commands items={[c("mode", "Mode Shapes", true), c("damping", "Modal Damping Ratio..", false, true), c("nodal", "Nodal Results of RS", false, true)]} /></GroupBody>
            <Caption>Mode shape</Caption>
          </Group>
          <Group>
            <GroupBody><Commands items={[c("influ", "Influ. Lines", true), c("influ", "Influ. Surfaces", true), c("tracer", "Moving Tracer", true)]} /></GroupBody>
            <Caption>Moving Load</Caption>
          </Group>
          <Group>
            <GroupBody><Commands items={[c("thRes", "T.H Results", true), c("thGraph", "T.H Graph/Text", true), c("stage", "Stage/Step Graph", false, true)]} /></GroupBody>
            <Caption>Time History</Caption>
          </Group>
          <Group>
            <GroupBody>
              <Commands width={62} items={[c("cable", "Cable Control", true), c("camber", "Camber/Reaction", true), c("tendon", "Tendon Loss Graph", false, true)]} />
              <BigCommand disabled>
                <svg width="18" height="18" viewBox="0 0 18 18" fill="none"><path d="M1 1h15v16H1z" fill="#e8edf3" stroke="#b6bcc6" /><path d="M4 4v10h10M7 13V7M10 13V9M13 13v-3" stroke="#8ca8cc" strokeWidth="1.400" /></svg>
                <span>{"Bridge Girder\nDiagram"}</span>
              </BigCommand>
            </GroupBody>
            <Caption>Bridge</Caption>
          </Group>
          <Group>
            <GroupBody>
              <BigCommand>
                <svg width="19" height="20" viewBox="0 0 19 20" fill="none"><path d="M1 1h16v12l-5 5H7L1 13z" fill="#fff" stroke="#a0a8b0" /><path d="M2 4h14v7H2z" fill="#2a80c8" /><text x="3" y="10" fontSize="6" fontWeight="700" fill="#fff" fontFamily="Liberation Sans, sans-serif">Text</text><circle cx="14" cy="16" r="3" fill="#eee" stroke="#777" /></svg>
                <span>{"Text\nOutput"}</span>
              </BigCommand>
            </GroupBody>
            <Caption>Text</Caption>
          </Group>
          <Group>
            <GroupBody>
              <BigCommand>
                <svg width="20" height="20" viewBox="0 0 20 20" fill="none"><path d="M1 2h17v13H1zM6 18h8M10 15v3" fill="#f5f5f5" stroke="#666e78" strokeWidth="1.300" /><path d="M5 5h9v8H5z" fill="#4c5868" /><path d="M5 8h9M5 10.500h9M8 6v7M11 6v7" stroke="#dde" strokeWidth=".7" /><path d="M13 0h7v7h-7z" fill="#b01c28" /><path d="M14.500 2h4M16.500 2v4" stroke="#fff" strokeWidth="1.200" /></svg>
                <span>{"Results\nTables ▾"}</span>
              </BigCommand>
            </GroupBody>
            <Caption>Tables</Caption>
          </Group>
        </Ribbon>

        <StripRow>
          <Grip />
          <ToolButton aria-label="Undo"><Icon name="left" /></ToolButton><Caret $dim />
          <Separator />
          <ToolButton aria-label="Redo"><Icon name="right" /></ToolButton><Caret $dim />
          <Tools list=": drop tree | pick box poly circ | plane down | unsel unsel circ | arrowPick" />
          <Picker label="Node selection" value="" plain />
          <Tools list="joint" />
          <Picker label="Element selection" value="" plain />
          <Tools list=": axis axisD lines tri inbox | edit : frame fan* copy* monitor monitor | node nodes : copyRed lock lock*" />
        </StripRow>

        <Workspace>
          <SidePanel>
            <PanelTitle>
              <span>Tree Menu</span>
              <svg width="5" height="7" viewBox="0 0 5 7"><path d="M1 0h3v3H1zM0 4h5M2.500 4v3" stroke="#ddd" fill="none" /></svg>
              <svg width="6" height="6" viewBox="0 0 6 6"><path d="M0 0l6 6M6 0L0 6" stroke="#eee" strokeWidth="1.300" /></svg>
            </PanelTitle>
            <PanelTabs>
              {["Reactions", "Deformations", "Forces", "Stresses"].map((t) => <PanelTab key={t} $active={t === "Stresses"}>{t}</PanelTab>)}
            </PanelTabs>
            <PanelBody onSubmit={(e) => e.preventDefault()}>
              <FirstLine>
                <Picker label="Result type" value="Beam Stresses" /><MoreButton type="button" aria-label="More result types">...</MoreButton>
              </FirstLine>
              <Box $h={40}>
                <legend>Load Cases/Combinations</legend>
                <Line><Picker label="Load case" value="CBmin: LCB1" /><MoreButton type="button" aria-label="More load cases">...</MoreButton></Line>
                <Line><span>Step</span><Picker label="Step" value="" disabled w={86} h={13} /></Line>
              </Box>
              <Box $h={50}>
                <legend>Components</legend>
                <Line $pad={7} $gap={8}><span>Part</span><Picker label="Part" value="Total" w={78} /></Line>
                <RadioGrid>
                  {["Sax", "Ssy", "Ssz", "Sby", "Sbz", "Combined"].map((n) => <Choice key={n}><Radio name="component" defaultChecked={n === "Combined"} />{n}</Choice>)}
                </RadioGrid>
              </Box>
              <Box $h={74}>
                <legend>Combined(Axial+Moment)</legend>
                <SectionLayout>
                  <div>
                    {["Maximum", "1 (-y,+z)", "2 (+y,+z)", "3 (+y,-z)", "4 (-y,-z)"].map((n, i) => <Choice key={n}><Radio name="corner" defaultChecked={i === 0} />{n}</Choice>)}
                  </div>
                  <SectionDiagram />
                </SectionLayout>
              </Box>
              <Box $h={65}>
                <legend>Type of Display</legend>
                <DisplayGrid>
                  <DisplayOption label="Contour" checked /><DisplayOption label="Deform" checked />
                  <DisplayOption label="Values" /><DisplayOption label="Legend" />
                  <DisplayOption label="Animate" /><DisplayOption label="Undeformed" checked more={false} />
                  <DisplayOption label="Mirrored" />
                </DisplayGrid>
              </Box>
              <Box $h={32}>
                <legend>Output Section Location</legend>
                <OutputGrid>
                  {["I", "Center", "J", "Max", "All"].map((n) => <Choice key={n} $dim><Check disabled defaultChecked={n === "Max"} />{n}</Choice>)}
                </OutputGrid>
              </Box>
              <Actions><PushButton $strong>Apply</PushButton><PushButton type="button">Close</PushButton></Actions>
              <Actions><IconPush type="button" aria-label="List"><Icon name="list" /></IconPush><IconPush type="button" aria-label="Print"><Icon name="stack" /></IconPush></Actions>
            </PanelBody>
          </SidePanel>

          <Main>
            <Canvas>
              <BridgeModel />
              <StageBar>
                <Icon name="section" />
                <StageCombo>
                  <select aria-label="Stage" defaultValue="Base"><option>Base</option></select><Caret />
                </StageCombo>
                <Separator /><Icon name="sectionRed" />
              </StageBar>
            </Canvas>
            <SheetTabs>
              <svg width="4" height="6" viewBox="0 0 4 6"><path d="M3.500 0v6L0 3z" fill="none" stroke="#333" strokeWidth=".8" /></svg>
              <Sheet>Start Page</Sheet><Sheet $active>Model View</Sheet>
              <Spacer />
              <svg width="4" height="6" viewBox="0 0 4 6"><path d="M.5 0v6L4 3z" fill="none" stroke="#333" strokeWidth=".8" /></svg>
            </SheetTabs>
          </Main>

          <RightStrip>
            <Tools list=": zoomFit zoomRed zoomIn zoomOut zoomFit : zoomDyn rotate pan : refresh view | cubeFill cube cube cubeFill tripod | addWin lockWin" />
          </RightStrip>
        </Workspace>

        <StatusBar>
          <span>For Help, press F1</span>
          <Spacer />
          <StatusCell $w={54}>&nbsp;Frame-80</StatusCell>
          <StatusCell $w={77}>U: 37.73973, 10480.2, -</StatusCell>
          <StatusCell $w={78}>G: 37.73973, 10480.2, -</StatusCell>
          <StatusTools>
            <Picker label="Force unit" value="N" w={31} />
            <Picker label="Length unit" value="mm" w={31} />
            <Separator />
            <StatusButton aria-label="Snap"><Icon name="snap" size={9} /></StatusButton>
            <StatusButton aria-label="Grid"><Icon name="grid" size={9} /></StatusButton>
            <StatusButton aria-label="Play"><Icon name="play" size={9} /></StatusButton>
            <Picker label="Filter" value="non" w={29} />
            <StatusButton aria-label="Query">?</StatusButton>
            <StatusButton aria-label="Colour" $fill="#00f4ff" />
            <NumberBox aria-label="Current" defaultValue="1" disabled />
            <Stepper aria-label="Step current"><svg width="5" height="8" viewBox="0 0 5 8"><path d="M0 3l2.500-3L5 3zM0 5l2.500 3L5 5z" fill="#555" /></svg></Stepper>
            <span>/</span>
            <NumberBox aria-label="Total" defaultValue="2" />
            <Stepper aria-label="Step total"><svg width="5" height="8" viewBox="0 0 5 8"><path d="M0 3l2.500-3L5 3zM0 5l2.500 3L5 5z" fill="#555" /></svg></Stepper>
          </StatusTools>
        </StatusBar>
      </Window>
    </Page>
  );
}
